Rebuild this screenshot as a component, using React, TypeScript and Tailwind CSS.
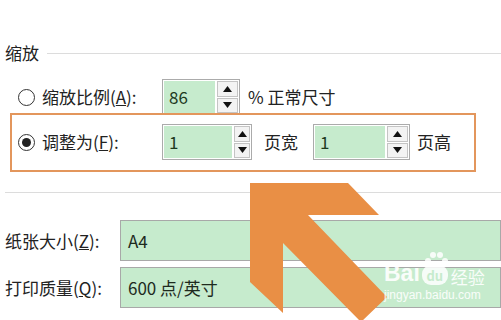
import React from 'react';

function Radio({ checked }: { checked?: boolean }) {
  return (
    <span className="flex h-[17px] w-[17px] shrink-0 items-center justify-center rounded-full border-[1.5px] border-[#333] bg-white">
      {checked && <span className="h-[9px] w-[9px] rounded-full bg-[#222]" />}
    </span>
  );
}

function Spinner({ value, width, inputWidth }: { value: string; width: number; inputWidth: number }) {
  return (
    <div
      className="flex h-[36px] shrink-0 border border-[#ababab] bg-white p-[1px]"
      style={{ width }}
    >
      <div
        className="flex items-center bg-[#c6ebcd] pl-[5px] text-[17px] text-[#1e3a1e]"
        style={{ width: inputWidth }}
      >
        {value}
      </div>
      <div className="ml-[2px] flex flex-1 flex-col gap-[1px]">
        <div className="flex flex-1 items-center justify-center border border-[#c4c4c4] bg-[#f3f3f3]">
          <svg width="9" height="6" viewBox="0 0 9 6">
            <polygon points="4.5,0 9,6 0,6" fill="#111" />
          </svg>
        </div>
        <div className="flex flex-1 items-center justify-center border border-[#c4c4c4] bg-[#f3f3f3]">
          <svg width="9" height="6" viewBox="0 0 9 6">
            <polygon points="0,0 9,0 4.5,6" fill="#111" />
          </svg>
        </div>
      </div>
    </div>
  );
}

function Field({ label, hot, rest, value }: { label: string; hot: string; rest: string; value: string }) {
  return (
    <div className="flex items-center">
      <div className="w-[120px] shrink-0 pl-[5px] text-[17px] text-[#222]">
        {label}(<span className="underline">{hot}</span>){rest}
      </div>
      <div className="flex h-[41px] flex-1 items-center border border-[#a8a8a8] bg-[#c6ebcd] pl-[7px] text-[17px] text-[#1e2a1e]">
        {value}
      </div>
    </div>
  );
}

export default function App() {
  return (
    <div
      className="relative h-[320px] w-[501px] overflow-hidden bg-white"
      style={{ fontFamily: '"Noto Sans CJK SC", "Noto Sans", sans-serif' }}
    >
      {/* 缩放 header */}
      <div className="flex items-center pl-[5px] pt-[40px]">
        <span className="text-[17px] leading-[26px] text-[#222]">缩放</span>
        <div className="ml-[8px] h-px flex-1 bg-[#dcdcdc]" />
      </div>

      {/* 缩放比例 */}
      <div className="mt-[13px] flex items-center pl-[18px]">
        <Radio />
        <span className="ml-[7px] w-[120px] text-[17px] text-[#222]">
          缩放比例(<span className="underline">A</span>):
        </span>
        <Spinner value="86" width={78} inputWidth={51} />
        <span className="ml-[8px] text-[17px] text-[#222]">% 正常尺寸</span>
      </div>

      {/* 调整为 (highlighted) */}
      <div className="relative z-10 mx-[10px] -mt-[2px] mr-[25px] border-2 border-[#e3965c] pb-[10px] pl-[6px] pt-[9px]">
        <div className="flex items-center">
          <Radio checked />
          <span className="ml-[7px] w-[120px] text-[17px] text-[#222]">
            调整为(<span className="underline">F</span>):
          </span>
          <Spinner value="1" width={90} inputWidth={68} />
          <span className="ml-[12px] text-[17px] text-[#222]">页宽</span>
          <div className="ml-[15px]">
            <Spinner value="1" width={97} inputWidth={70} />
          </div>
          <span className="ml-[7px] text-[17px] text-[#222]">页高</span>
        </div>
      </div>

      <div className="ml-[5px] mt-[20px] h-px bg-[#dcdcdc]" />

      {/* paper fields */}
      <div className="mt-[27px] flex flex-col gap-[6px]">
        <Field label="纸张大小" hot="Z" rest=":" value="A4" />
        <Field label="打印质量" hot="Q" rest=":" value="600 点/英寸" />
      </div>

      {/* annotation arrow */}
      <svg className="pointer-events-none absolute left-0 top-0" width="501" height="320" viewBox="0 0 501 320">
        <polygon
          points="250,183 348,183 379,215 308,215 387,297 361,322 283,243 283,313 250,282"
          fill="#e98f45"
        />
      </svg>

      {/* watermark */}
      <div className="pointer-events-none absolute left-[384px] top-[262px] flex flex-col text-white/90">
        <div className="flex items-end">
          <span className="text-[23px] font-bold leading-none" style={{ fontFamily: 'Arial, "Liberation Sans", sans-serif' }}>
            Bai
          </span>
          <span className="relative ml-[2px] flex h-[20px] w-[26px] items-center justify-center rounded-[9px] bg-white/85 text-[13px] font-bold leading-none text-[#c6ebcd]">
            du
            <svg className="absolute -top-[14px] left-[2px]" width="24" height="14" viewBox="0 0 24 14">
              <circle cx="4" cy="10" r="3" fill="white" opacity="0.85" />
              <circle cx="9" cy="4" r="3" fill="white" opacity="0.85" />
              <circle cx="16" cy="4" r="3" fill="white" opacity="0.85" />
              <circle cx="21" cy="10" r="3" fill="white" opacity="0.85" />
            </svg>
          </span>
          <span className="ml-[3px] text-[17px] leading-none">经验</span>
        </div>
        <span className="mt-[4px] text-[12px] leading-none" style={{ fontFamily: 'Arial, "Liberation Sans", sans-serif' }}>
          jingyan.baidu.com
        </span>
      </div>
    </div>
  );
}
